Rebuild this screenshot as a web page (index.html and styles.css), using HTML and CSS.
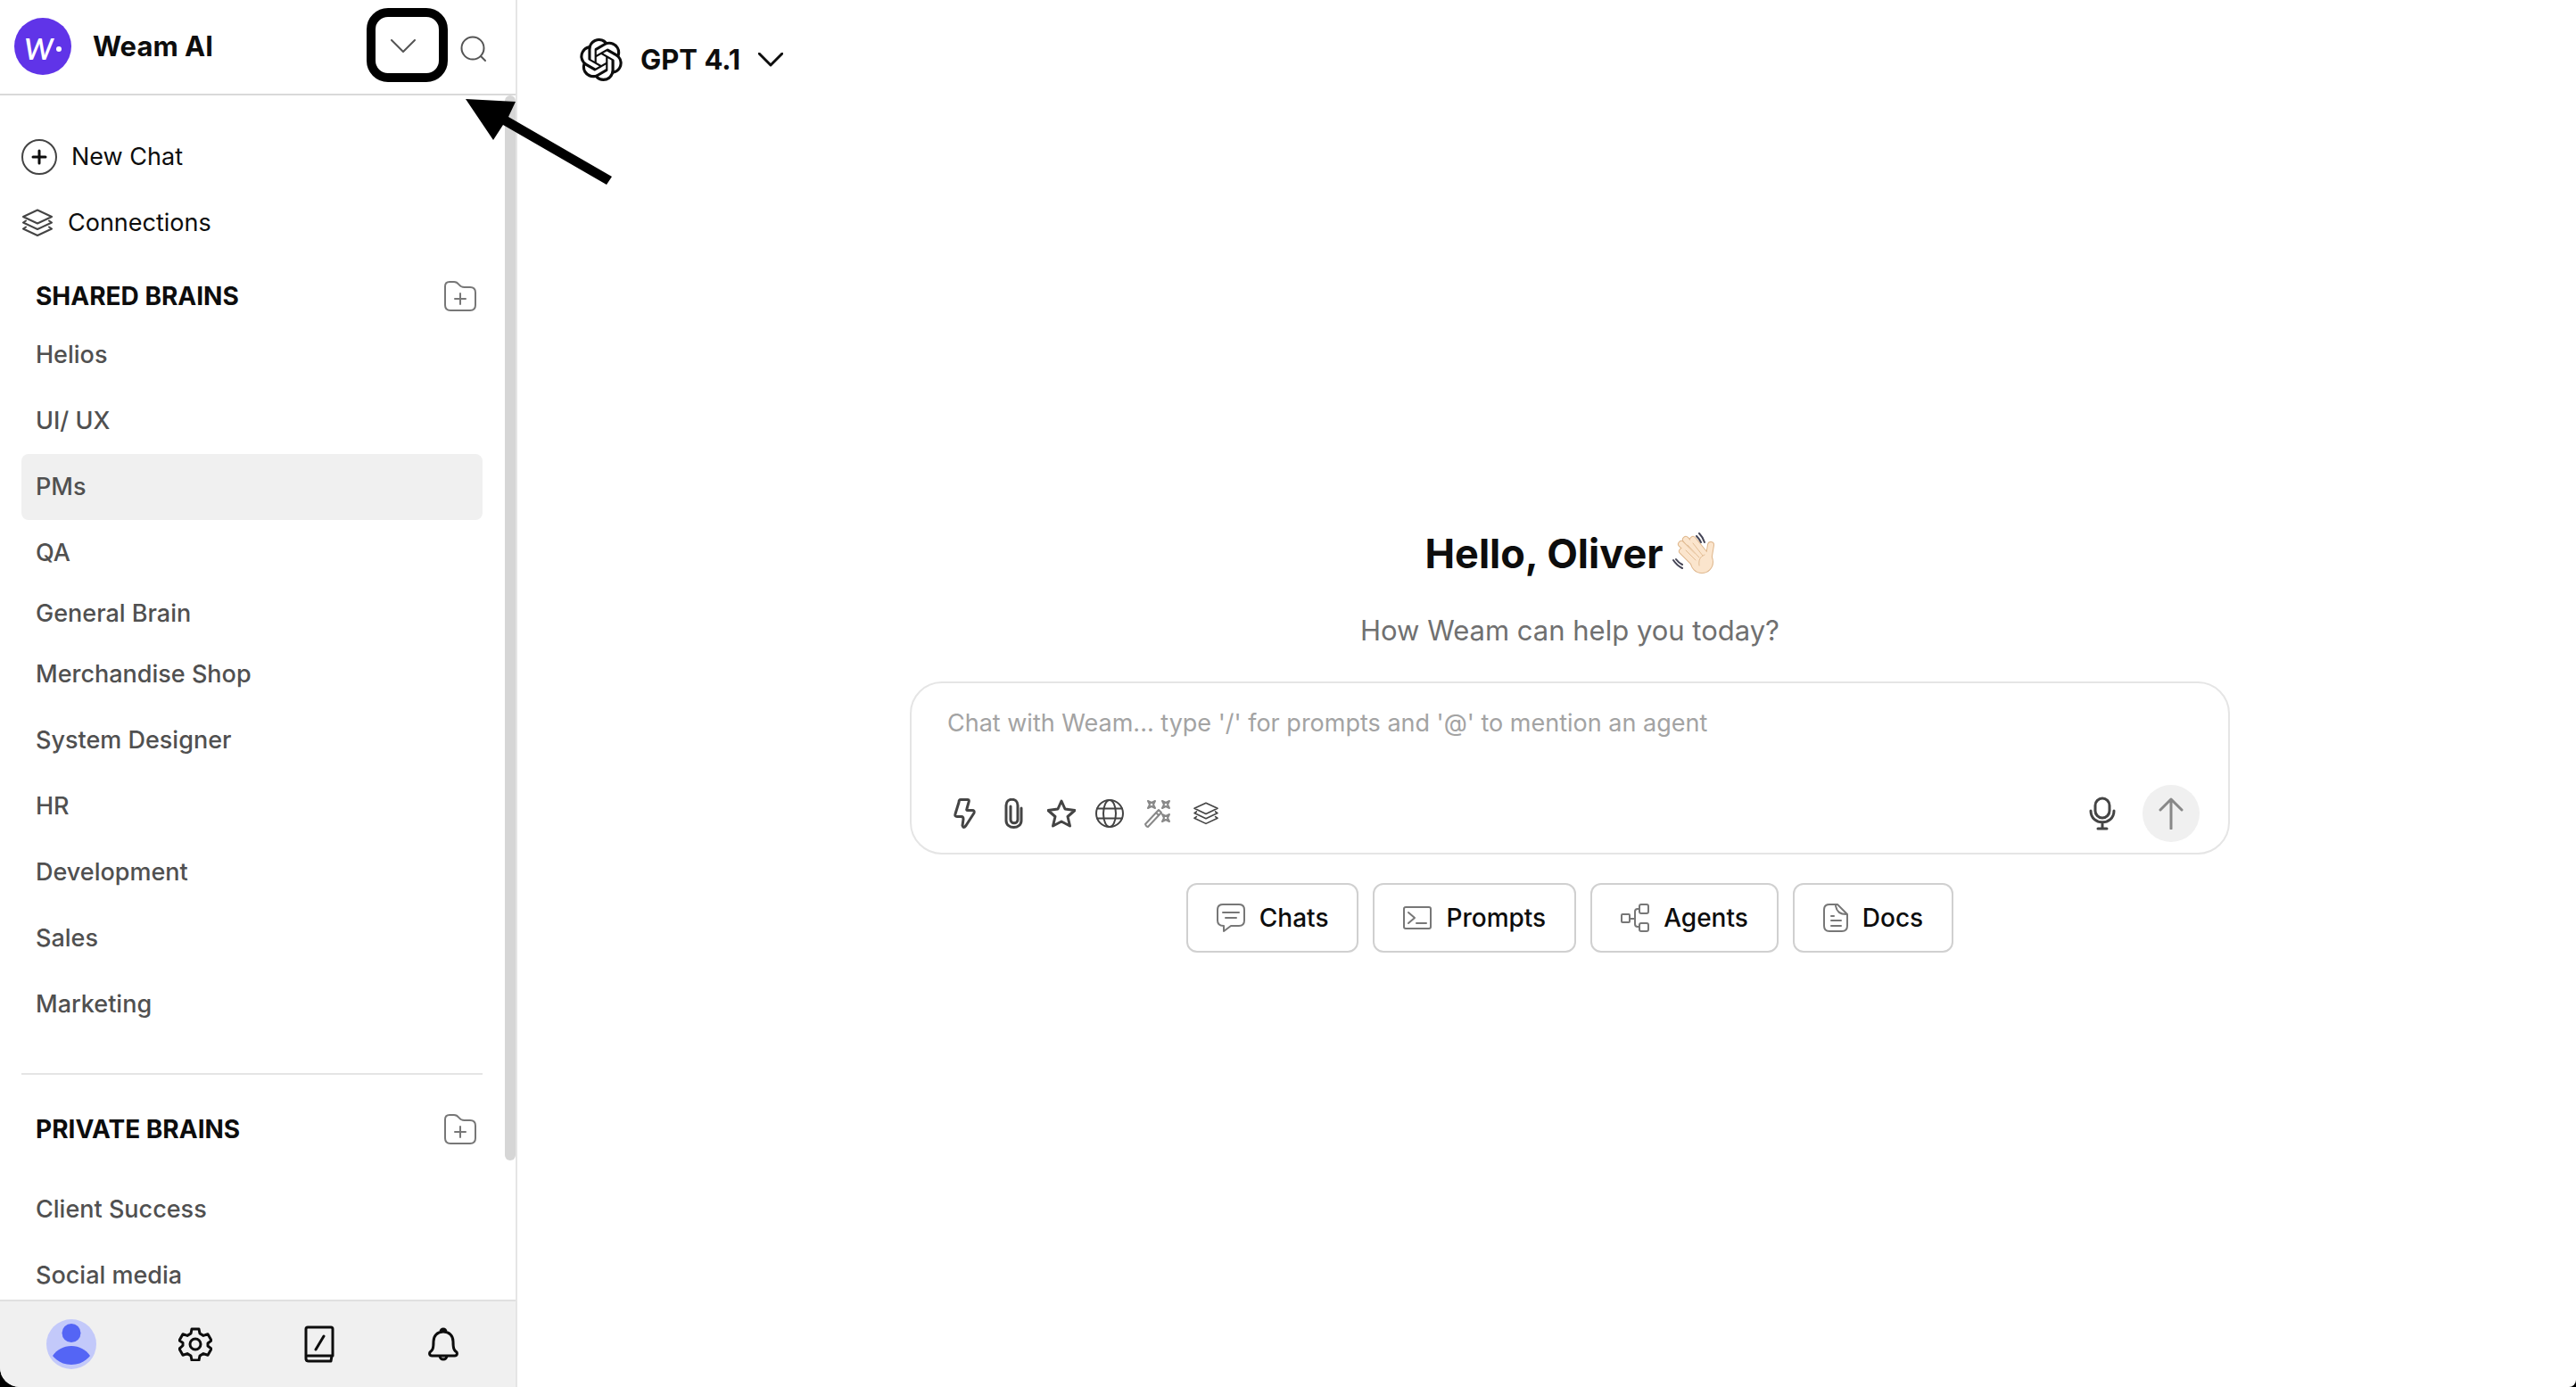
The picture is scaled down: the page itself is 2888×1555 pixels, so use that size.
FILE: index.html
```html
<!DOCTYPE html>
<html lang="en">

<head>
    <meta charset="UTF-8">
    <meta name="viewport" content="width=device-width, initial-scale=1.0">
    <title>Weam AI</title>
    <link rel="stylesheet" href="styles.css">
</head>

<body>

    <!-- Shared icons -->
    <svg class="sprite" aria-hidden="true">
        <symbol id="icon-layers" viewBox="0 0 36 32">
            <path d="M18 1.500 34 9 18 16.500 2 9z M5 13.500 2 15.500 18 23 34 15.500 31 13.500 M5 20.500 2 22.500 18 30 34 22.500 31 20.500" />
        </symbol>
        <symbol id="icon-folder" viewBox="0 0 36 34">
            <path d="M1 8V6c0-3 2-5 5-5h5c3 0 4 1 5.500 3s3 3 6 3H29c4 0 6 2 6 6v14c0 4-2 6-6 6H7c-4 0-6-2-6-6z M18 14v12 M12 20h12" />
        </symbol>
        <symbol id="hand-shape" viewBox="0 0 48 48">
            <path d="m11 21 15 15M10 13l18 18M15 8l17 19M23 8l13 16M43 14l-3 18" />
            <circle cx="33" cy="33" r="9" />
        </symbol>
    </svg>

    <div class="app">
        <aside class="sidebar">
            <header class="brand">
                <div class="brand-logo"><span>w</span><i></i></div>
                <h2>Weam AI</h2>
                <button class="icon-btn brand-toggle" aria-label="Switch workspace">
                    <svg width="28" height="16" viewBox="0 0 28 16"><path d="M1 1 14 14 27 1" /></svg>
                </button>
                <button class="icon-btn" aria-label="Search">
                    <svg width="30" height="36" viewBox="0 -6 30 36"><circle cx="14" cy="14" r="12.500" /><path d="m23 23 5 5" /></svg>
                </button>
            </header>

            <div class="sidebar-scroll">
                <nav class="sidebar-content">
                    <a class="quick-link" href="#">
                        <svg width="40" height="40" viewBox="0 0 40 40"><circle cx="20" cy="20" r="19" /><path class="plus" d="M20 13v14M13 20h14" /></svg>
                        New Chat
                    </a>
                    <a class="quick-link" href="#">
                        <svg width="36" height="32"><use href="#icon-layers" /></svg>
                        Connections
                    </a>

                    <div class="section-title">
                        <h3>SHARED BRAINS</h3>
                        <button class="icon-btn" aria-label="Add shared brain"><svg width="36" height="34"><use href="#icon-folder" /></svg></button>
                    </div>
                    <ul class="brain-list">
                        <li><a href="#">Helios</a></li>
                        <li><a href="#">UI/ UX</a></li>
                        <li><a class="active" href="#">PMs</a></li>
                        <li><a href="#">QA</a></li>
                        <li><a class="general" href="#">General Brain</a></li>
                        <li><a href="#">Merchandise Shop</a></li>
                        <li><a href="#">System Designer</a></li>
                        <li><a href="#">HR</a></li>
                        <li><a href="#">Development</a></li>
                        <li><a href="#">Sales</a></li>
                        <li><a href="#">Marketing</a></li>
                    </ul>

                    <div class="section-title private">
                        <h3>PRIVATE BRAINS</h3>
                        <button class="icon-btn" aria-label="Add private brain"><svg width="36" height="34"><use href="#icon-folder" /></svg></button>
                    </div>
                    <ul class="brain-list">
                        <li><a href="#">Client Success</a></li>
                        <li><a href="#">Social media</a></li>
                    </ul>
                </nav>
                <div class="scroll-thumb"></div>
            </div>

            <footer class="sidebar-footer">
                <button class="icon-btn" aria-label="Profile">
                    <svg class="avatar" width="56" height="56" viewBox="0 0 56 56">
                        <circle class="avatar-bg" cx="28" cy="28" r="28" />
                        <circle cx="28" cy="15.500" r="10.500" />
                        <path d="M7 41c5-7 12-11 21-11s16 4 21 11c-5 6-12 10-21 10S12 47 7 41z" />
                    </svg>
                </button>
                <button class="icon-btn" aria-label="Settings">
                    <svg width="38" height="38" viewBox="0 0 38 38">
                        <circle cx="19" cy="19" r="6" />
                        <path d="M15 2h8l1 5 4 2.400 5-1.600 4 7-4 3.200v3l4 3.200-4 7-5-1.600-4 2.400-1 5h-8l-1-5-4-2.400-5 1.600-4-7L5 20.500v-3L1 14.800l4-7 5 1.600L14 7z" />
                    </svg>
                </button>
                <button class="icon-btn" aria-label="Prompt library">
                    <svg width="34" height="42" viewBox="0 0 34 42"><path d="M2 37V4q0-2 2-2h26q2 0 2 2v30H4M2 37q0 3 3 3h25l1-6M22 12 13 27" /></svg>
                </button>
                <button class="icon-btn" aria-label="Notifications">
                    <svg width="34" height="38" viewBox="0 0 34 38"><path d="M14 5a3 3 0 1 1 6 0M17 5c7 0 11 5 11 11 0 8 1 10 4 12 1 2 0 4-2 4H4c-2 0-3-2-2-4 3-2 4-4 4-12C6 10 10 5 17 5zM13 32a4 4 0 0 0 8 0" /></svg>
                </button>
            </footer>
        </aside>

        <main class="chat">
            <button class="model-select">
                <svg class="model-logo" width="48" height="48" viewBox="0 0 24 24">
                    <path d="M22.2819 9.8211a5.9847 5.9847 0 0 0-.5157-4.9108 6.0462 6.0462 0 0 0-6.5098-2.9A6.0651 6.0651 0 0 0 4.9807 4.1818a5.9847 5.9847 0 0 0-3.9977 2.9 6.0462 6.0462 0 0 0 .7427 7.0966 5.98 5.98 0 0 0 .511 4.9107 6.051 6.051 0 0 0 6.5146 2.9001A5.9847 5.9847 0 0 0 13.2599 24a6.0557 6.0557 0 0 0 5.7718-4.2058 5.9894 5.9894 0 0 0 3.9977-2.9001 6.0557 6.0557 0 0 0-.7475-7.0729zm-9.022 12.6081a4.4755 4.4755 0 0 1-2.8764-1.0408l.1419-.0804 4.7783-2.7582a.7948.7948 0 0 0 .3927-.6813v-6.7369l2.02 1.1686a.071.071 0 0 1 .038.052v5.5826a4.504 4.504 0 0 1-4.4945 4.4944zm-9.6607-4.1254a4.4708 4.4708 0 0 1-.5346-3.0137l.142.0852 4.783 2.7582a.7712.7712 0 0 0 .7806 0l5.8428-3.3685v2.3324a.0804.0804 0 0 1-.0332.0615L9.74 19.9502a4.4992 4.4992 0 0 1-6.1408-1.6464zM2.3408 7.8956a4.485 4.485 0 0 1 2.3655-1.9728V11.6a.7664.7664 0 0 0 .3879.6765l5.8144 3.3543-2.0201 1.1685a.0757.0757 0 0 1-.071 0l-4.8303-2.7865A4.504 4.504 0 0 1 2.3408 7.872zm16.5963 3.8558L13.1038 8.364 15.1192 7.2a.0757.0757 0 0 1 .071 0l4.8303 2.7913a4.4944 4.4944 0 0 1-.6765 8.1042v-5.6772a.79.79 0 0 0-.407-.667zm2.0107-3.0231l-.142-.0852-4.7735-2.7818a.7759.7759 0 0 0-.7854 0L9.409 9.2297V6.8974a.0662.0662 0 0 1 .0284-.0615l4.8303-2.7866a4.4992 4.4992 0 0 1 6.6802 4.66zM8.3065 12.863l-2.02-1.1638a.0804.0804 0 0 1-.038-.0567V6.0742a4.4992 4.4992 0 0 1 7.3757-3.4537l-.142.0805L8.704 5.459a.7948.7948 0 0 0-.3927.6813zm1.0976-2.3654l2.602-1.4998 2.6069 1.4998v2.9994l-2.5974 1.4997-2.6067-1.4997Z" />
                </svg>
                GPT 4.1
                <svg width="28" height="16" viewBox="0 0 28 16"><path d="M1 1 14 14 27 1" /></svg>
            </button>

            <div class="welcome">
                <h1>
                    Hello, Oliver
                    <svg class="wave" viewBox="0 0 48 48" role="img" aria-label="Waving hand">
                        <use class="hand-edge" href="#hand-shape" />
                        <use class="hand" href="#hand-shape" />
                        <path class="crease" d="m15 20 11 11M17 14l13 14M23 12l11 14M36 25c-5 2-7 6-6 12" />
                        <path class="motion" d="M30 1q4 4 6 10M27 4q3 3 5 7M1 31q4 6 10 9M4 30q3 4 7 6" />
                    </svg>
                </h1>
                <p class="subtitle">How Weam can help you today?</p>

                <form class="composer">
                    <textarea rows="1" aria-label="Message" placeholder="Chat with Weam... type '/' for prompts and '@' to mention an agent"></textarea>
                    <div class="toolbar">
                        <button type="button" class="icon-btn" aria-label="Quick prompts"><svg width="32" height="34" viewBox="0 0 32 34"><path d="M11 1.500h8q2 0 1 3l-2 7q-1 2 1 2h5q3 0 2 3l-9 14q-3 4-4 0l1-7q0-3-2-3H7q-3 0-2-3l4-13q0-3 2-3z" /></svg></button>
                        <button type="button" class="icon-btn" aria-label="Attach file"><svg width="32" height="34" viewBox="0 0 32 34"><path d="M25 11v14c0 10-17 10-17 0V8c0-9 13-9 13 0v16c0 5-8 5-8 0V9" /></svg></button>
                        <button type="button" class="icon-btn" aria-label="Favourite"><svg width="32" height="34" viewBox="0 0 32 34"><path d="m16 3 4 9 11 1.500-8 7L25.500 31 16 26l-9.500 5L9 20.500l-8-7L12 12z" /></svg></button>
                        <button type="button" class="icon-btn fine" aria-label="Web search"><svg width="32" height="34" viewBox="0 0 32 34"><circle cx="16" cy="17" r="15" /><ellipse cx="16" cy="17" rx="7" ry="15" /><path d="M2 11.500h28M2 22.500h28" /></svg></button>
                        <button type="button" class="icon-btn fine muted" aria-label="Improve prompt"><svg width="32" height="34" viewBox="0 0 32 34"><path d="m2 29 15-16 3 3L5 32q-2 0-3-3zM14 16l3 3M5 3l4 2 4-2-2 4 2 4-4-2-4 2 2-4zM21 3l4 2 4-2-2 4 2 4-4-2-4 2 2-4zM21 18l4 2 4-2-2 4 2 4-4-2-4 2 2-4z" /></svg></button>
                        <button type="button" class="icon-btn fine" aria-label="Connections"><svg width="32" height="26"><use href="#icon-layers" /></svg></button>
                        <button type="button" class="icon-btn mic" aria-label="Voice input"><svg width="30" height="38" viewBox="0 0 30 38"><rect x="7" y="2" width="16" height="22" rx="8" /><path d="M2 16c0 17 26 17 26 0M15 29v7M10 36h10" /></svg></button>
                        <button type="submit" class="send" aria-label="Send"><svg width="28" height="36" viewBox="0 0 28 36"><path d="M14 35V2M2 14 14 2l12 12" /></svg></button>
                    </div>
                </form>

                <div class="shortcuts">
                    <button><svg width="32" height="32" viewBox="0 0 32 32"><path d="M7 1h18q6 0 6 6v12q0 6-6 6h-9l-8 6v-6q-7 0-7-6V7q0-6 6-6zM7 10h18M10 16h12" /></svg>Chats</button>
                    <button><svg width="32" height="32" viewBox="0 0 32 32"><rect x="1" y="4" width="30" height="24" rx="2" /><path d="m6 10 7 6-7 6M15 22h11" /></svg>Prompts</button>
                    <button><svg width="32" height="32" viewBox="0 0 32 32"><rect x="1" y="12" width="9" height="9" rx="1" /><rect x="21" y="1" width="10" height="10" rx="2" /><rect x="21" y="22" width="10" height="9" rx="2" /><path d="M10 17h6M21 6h-2q-3 0-3 3v14q0 3 3 3h2" /></svg>Agents</button>
                    <button><svg width="28" height="32" viewBox="2 0 28 32"><path d="M18 1H9Q3 1 3 7v18q0 6 6 6h14q6 0 6-6V12zM16 2q1 10 12 10M11 14h3M11 19h11M11 25h11" /></svg>Docs</button>
                </div>
            </div>
        </main>
    </div>

    <!-- Callout that points at the workspace menu -->
    <div class="callout-box"></div>
    <svg class="callout-arrow" viewBox="0 0 164 96" aria-hidden="true">
        <path d="M0 0 56 3 48 20 164 87 158 96 42 29 31 46z" />
    </svg>

</body>

</html>
```

FILE: styles.css
```css
* {
    box-sizing: border-box;
}

body {
    margin: 0;
    background-color: #000;
    color: #0d0d0d;
    font-family: Inter, "Liberation Sans", sans-serif;
    font-size: 27px;
    line-height: 34px;
}

h1, h2, h3, p, ul {
    margin: 0;
    padding: 0;
}

ul {
    list-style: none;
}

a {
    color: inherit;
    text-decoration: none;
}

button {
    font: inherit;
    color: inherit;
    background: none;
    border: none;
    padding: 0;
    cursor: pointer;
}

svg {
    display: block;
    flex: none;
    fill: none;
    stroke: currentColor;
    stroke-width: 2;
    stroke-linecap: round;
    stroke-linejoin: round;
}

.sprite {
    position: absolute;
    width: 0;
    height: 0;
}

.app {
    display: flex;
    height: 100vh;
    background-color: #fff;
    border-radius: 0 0 8px 22px;
    overflow: hidden;
}

/* Sidebar */
.sidebar {
    display: flex;
    flex-direction: column;
    flex: none;
    width: 580px;
    border-right: 2px solid #e5e5e5;
}

.brand {
    display: flex;
    align-items: center;
    flex: none;
    height: 107px;
    padding: 0 32px 2px 16px;
    border-bottom: 2px solid #d9d9d9;
    color: #555;
}

.brand h2 {
    flex: 1;
    margin-left: 24px;
    color: #0d0d0d;
    font-size: 31px;
    font-weight: 700;
}

.brand-logo {
    display: flex;
    align-items: center;
    justify-content: center;
    gap: 2px;
    width: 64px;
    height: 64px;
    padding-bottom: 4px;
    border-radius: 50%;
    background-color: #6034e8;
    color: #fff;
    font-family: Lato, sans-serif;
    font-size: 46px;
    font-style: italic;
    line-height: 56px;
}

.brand-logo i {
    width: 6px;
    height: 6px;
    margin-top: 10px;
    border-radius: 50%;
    background-color: #fff;
}

.brand-toggle {
    margin-right: 50px;
}

.icon-btn {
    display: flex;
    align-items: center;
    justify-content: center;
}

.sidebar-scroll {
    position: relative;
    flex: 1;
    min-height: 0;
    overflow: hidden;
}

.sidebar-content {
    padding: 32px 37px 0 24px;
}

.scroll-thumb {
    position: absolute;
    top: 0;
    right: 0;
    width: 12px;
    height: calc(100% - 156px);
    border-radius: 6px;
    background-color: #d6d6d6;
}

.quick-link {
    display: flex;
    align-items: center;
    gap: 16px;
    height: 74px;
}

.quick-link svg {
    color: #444;
}

.quick-link .plus {
    stroke: #0d0d0d;
    stroke-width: 3;
}

.section-title {
    display: flex;
    align-items: center;
    justify-content: space-between;
    height: 58px;
    padding: 0 7px 0 16px;
    margin-top: 16px;
}

.section-title h3 {
    font-size: 28px;
    font-weight: 700;
}

.section-title .icon-btn {
    color: #777;
}

.section-title.private {
    height: 116px;
    margin-top: 40px;
    padding-top: 8px;
    border-top: 2px solid #e5e5e5;
}

.brain-list a {
    display: flex;
    align-items: center;
    height: 74px;
    padding: 0 16px;
    border-radius: 8px;
    color: #505050;
    font-weight: 500;
}

.brain-list a.active {
    background-color: #f0f0f0;
}

.brain-list a.general {
    height: 62px;
}

.sidebar-footer {
    display: grid;
    grid-template-columns: repeat(4, 1fr);
    align-items: center;
    flex: none;
    height: 98px;
    padding: 0 12px 0 10px;
    border-top: 2px solid #e0e0e0;
    background-color: #f0f0f0;
}

.sidebar-footer svg {
    stroke-width: 3;
}

.sidebar-footer .avatar {
    fill: #5465f5;
    stroke: none;
}

.avatar .avatar-bg {
    fill: #c3c9fa;
}

/* Chat */
.chat {
    display: flex;
    flex-direction: column;
    flex: 1;
    padding-left: 52px;
}

.model-select {
    display: flex;
    align-items: center;
    align-self: flex-start;
    gap: 20px;
    height: 105px;
    padding: 28px 18px 0;
    font-size: 31px;
    font-weight: 700;
}

.model-select svg {
    stroke-width: 3;
}

.model-select .model-logo {
    fill: #0d0d0d;
    stroke: none;
}

.welcome {
    display: flex;
    flex-direction: column;
    align-items: center;
    justify-content: center;
    flex: 1;
    padding: 0 32px;
}

h1 {
    display: flex;
    align-items: center;
    gap: 10px;
    font-size: 45px;
    font-weight: 700;
    line-height: 58px;
}

.wave {
    width: 48px;
    height: 48px;
}

.wave .hand-edge {
    fill: #deb68c;
    stroke: #deb68c;
    stroke-width: 8;
}

.wave .hand {
    fill: #fbe5cd;
    stroke: #fbe5cd;
    stroke-width: 6;
}

.wave .crease {
    stroke: #e3bd94;
    stroke-width: 1;
}

.wave .motion {
    stroke: #445;
}

.subtitle {
    margin: 38px 0;
    color: #707070;
    font-size: 31px;
    line-height: 38px;
}

.composer {
    width: 100%;
    max-width: 1480px;
    padding: 26px 32px 12px 40px;
    border: 2px solid #e5e5e5;
    border-radius: 36px;
}

.composer textarea {
    display: block;
    width: 100%;
    height: 88px;
    padding: 2px 0;
    border: none;
    outline: none;
    resize: none;
    background: none;
    font: inherit;
}

.composer textarea::placeholder {
    color: #a3a3a3;
}

.toolbar {
    display: flex;
    align-items: center;
    gap: 22px;
    padding-left: 4px;
    color: #444;
}

.toolbar svg {
    stroke-width: 3;
}

.toolbar .fine svg {
    stroke-width: 2;
}

.toolbar .muted {
    color: #888;
}

.toolbar .mic {
    margin-left: auto;
    margin-right: 8px;
}

.send {
    display: flex;
    align-items: center;
    justify-content: center;
    width: 64px;
    height: 64px;
    border-radius: 50%;
    background-color: #f0f0f0;
    color: #888;
}

.shortcuts {
    display: flex;
    flex-wrap: wrap;
    gap: 16px;
    margin-top: 32px;
}

.shortcuts button {
    display: flex;
    align-items: center;
    gap: 16px;
    height: 78px;
    padding: 0 32px;
    border: 2px solid #d0d0d0;
    border-radius: 12px;
    font-size: 28px;
    font-weight: 500;
}

.shortcuts svg {
    color: #777;
}

/* Callout */
.callout-box {
    position: absolute;
    top: 9px;
    left: 411px;
    width: 91px;
    height: 83px;
    border: 10px solid #000;
    border-radius: 24px;
    pointer-events: none;
}

.callout-arrow {
    position: absolute;
    top: 111px;
    left: 522px;
    width: 164px;
    height: 96px;
    fill: #000;
    stroke: none;
    pointer-events: none;
}
```
